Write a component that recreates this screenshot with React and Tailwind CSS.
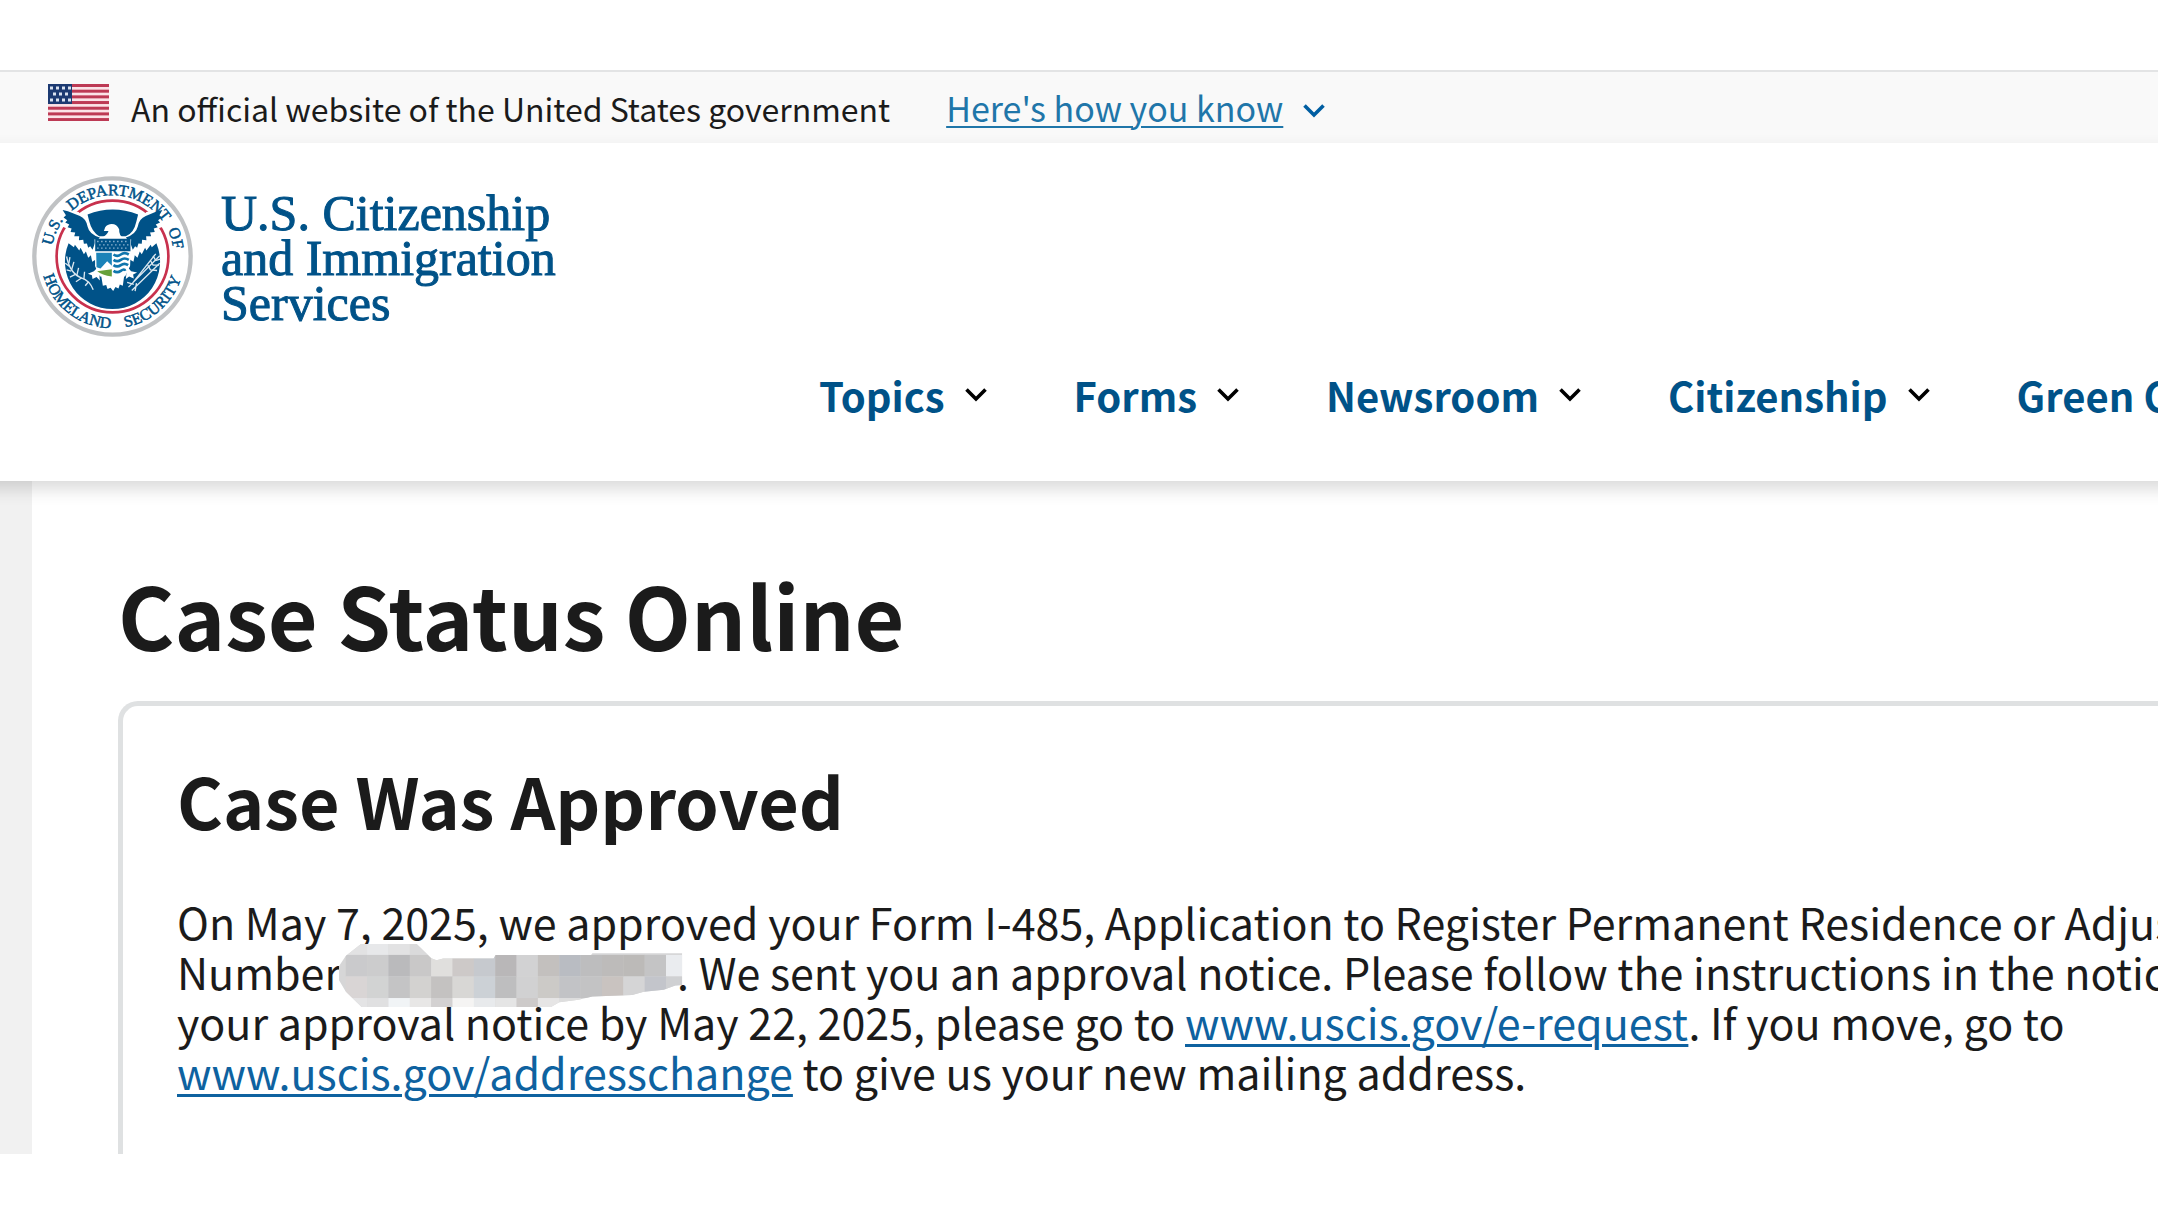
const SANS = "font-['Noto_Sans_CJK_SC','Noto_Sans',sans-serif]";

function Chevron({ className }) {
  return (
    <svg viewBox="0 0 22 14" className={`h-[14px] w-[22px] ${className}`} fill="none" stroke="currentColor" strokeWidth="3.6" aria-hidden="true">
      <path d="M1.5 1.5 L11 11 L20.500 1.5" />
    </svg>
  );
}

function Flag() {
  const stripes = [0, 1, 2, 3, 4, 5, 6];
  const stars = [
    [4, 4], [10, 4], [16, 4], [22, 4],
    [7, 10], [13, 10], [19, 10],
    [4, 16], [10, 16], [16, 16], [22, 16],
  ];
  return (
    <svg viewBox="0 0 61 37" className="h-[37px] w-[61px]" role="img" aria-label="U.S. flag">
      <rect width="61" height="37" fill="#fbe3e8" />
      {stripes.map((i) => (
        <rect key={i} y={i * 5.68} width="61" height="3" fill="#bd3a55" />
      ))}
      <rect width="24" height="20" fill="#1c3a72" />
      {stars.map(([x, y], i) => (
        <rect key={i} x={x - 2} y={y - 1.5} width="3" height="3" fill="#d9e2f0" />
      ))}
    </svg>
  );
}

function Seal() {
  const blue = "#005288";
  const letters = "font-['Liberation_Serif',serif] text-[48px]";
  return (
    <svg viewBox="36 32 484 484" className="h-[161px] w-[161px] shrink-0" role="img" aria-label="U.S. Department of Homeland Security seal">
      <defs>
        <path id="arcTop" d="M94 274 A184 184 0 0 1 462 274" />
        <path id="arcBottom" d="M62 274 A216 216 0 0 0 494 274" />
      </defs>
      <circle cx="278" cy="274" r="235" fill="#fff" stroke="#c0c2c4" strokeWidth="13" />
      <circle cx="278" cy="274" r="168" fill="none" stroke="#c8314d" strokeWidth="8" />
      <path d="M120 128 L176 140 L200 165 L140 190 L124 182 Z M436 128 L380 140 L356 165 L416 190 L434 182 Z" fill="#fff" />
      <path d="M203 148 Q278 118 355 148 L350 168 Q342 205 318 213 L238 213 Q216 200 208 168 Z" fill={blue} />
      <path
        d="M146 234 L162 246 L165 239 L178 256 L182 248 L192 267 L198 259 L205 278 L213 270 L217 290 L228 283 L226 304 L240 334 L316 334 L330 304 L330 283 L341 290 L345 270 L353 278 L360 259 L366 267 L376 248 L380 256 L393 239 L396 246 L410 234 A143 143 0 1 1 146 234 Z"
        fill={blue}
      />
      <path d="M128 134 L144 138 L180 152 Q199 160 203 184 Q208 208 240 217 L226 232 L218 254 L211 243 L205 248 L201 235 L192 236 L190 224 L177 225 L178 213 L163 213 L166 202 L152 200 L155 190 L143 186 L148 178 L136 172 L142 165 L131 157 L138 150 Z" fill={blue} />
      <path d="M428 134 L412 138 L378 152 Q358 160 354 184 Q348 208 318 217 L331 232 L339 254 L346 243 L352 248 L356 235 L366 236 L367 224 L380 225 L379 213 L394 213 L391 202 L405 200 L402 190 L414 186 L408 178 L421 172 L415 165 L426 157 L419 150 Z" fill={blue} />
      <path d="M254 192 Q256 180 270 177 Q290 174 298 192 Q297 212 312 219 L242 219 Q262 210 266 197 L252 197 Z" fill="#fff" />
      <path d="M243 326 L314 326 L309 362 L300 358 L296 370 L287 366 L280 378 L272 368 L263 372 L259 360 L249 362 Z" fill="#fff" />
      <path d="M236 304 L240 346 L230 336 L218 342 L216 330 L204 326 L222 318 Z M322 304 L318 342 L328 334 L342 340 L340 328 L352 322 L334 318 Z" fill="#fff" />
      <path d="M224 222 L334 222 L331 300 Q320 330 279 338 Q238 330 226 300 Z" fill="#fff" />
      <path d="M226 221 H332 V258 H226 Z" fill={blue} />
      <g stroke="#9fc0d8" strokeWidth="4" strokeDasharray="4 8">
        <path d="M232 229 H328" />
        <path d="M238 239 H328" />
        <path d="M232 249 H328" />
      </g>
      <path d="M229 263 H276 V302 L262 288 L242 310 L230 306 Z" fill="#1b83b8" />
      <path d="M232 318 L276 312 V334 Q246 330 232 318 Z" fill="#66a03a" />
      <g fill="none" stroke="#0f76ad" strokeWidth="8">
        <path d="M281 268 Q292 276 303 268 T327 268" />
        <path d="M281 284 Q292 292 303 284 T327 284" />
        <path d="M281 300 Q292 308 303 300 T325 300" />
        <path d="M281 317 Q292 325 303 317 T316 317" />
      </g>
      <g fill="none" stroke="#dce8f0" strokeWidth="4">
        <path d="M140 274 Q150 325 184 338 Q210 346 220 374" />
        <path d="M136 294 L149 304 M150 276 L147 294 M140 314 L154 318 M162 290 L155 314 M150 336 L168 327 M176 308 L171 330 M168 350 L186 338 M194 320 L192 342 M196 362 L206 350" />
        <path d="M420 272 L326 366 M420 294 L336 376 M408 266 L340 352 M322 352 L342 358 M346 378 L350 354" />
        <path d="M400 272 L408 286 L422 282 M392 286 L400 300 L418 300 M384 300 L392 314 L412 316" />
      </g>
      <g fill={blue} stroke={blue} strokeWidth="1.5" textAnchor="middle" className={letters}>
        <text><textPath href="#arcTop" startOffset="13%">U.S.</textPath></text>
        <text><textPath href="#arcTop" startOffset="54%">DEPARTMENT</textPath></text>
        <text><textPath href="#arcTop" startOffset="91%">OF</textPath></text>
        <text><textPath href="#arcBottom" startOffset="29%">HOMELAND</textPath></text>
        <text><textPath href="#arcBottom" startOffset="73%">SECURITY</textPath></text>
      </g>
    </svg>
  );
}

const MOSAIC = [
  { y: 72, h: 33, colors: ["#e2e2e3", "#e7e8ea", "#e2e2e3", "#dadadb"] },
  { y: 105, h: 65, colors: ["#cacacc", "#cccccd", "#bababc", "#c9c8c8", "#e0dfdd", "#cdc9c8", "#c6c9ce", "#b9b7b8", "#d2d2d3", "#c3c0be", "#b9bcc2", "#bdbdbe", "#bdbbba", "#bcbab8", "#c4c4c5", "#eaecef"] },
  { y: 170, h: 65, colors: ["#d9d5d5", "#d2d3d3", "#c4c4c5", "#d3d2d0", "#c4c2c1", "#d8d7d5", "#ccd1d6", "#bebebf", "#d1d1d2", "#cccac7", "#c2c3c6", "#c3c3c4", "#c9c3c0", "#d5d5d6", "#c3c5cb", "#cfd0d2"] },
  { y: 235, h: 30, colors: ["#e4e4e5", "#e0e0e1", "#f1f4f6", "#e8e7e6", "#d3d1d1", "#f5f4f3", "#e8eaec", "#e5e5e5", "#cdcac9", "#e6e5e5", "#dedede"] },
];

function Redaction() {
  return (
    <span className="relative inline-block h-[30px] w-[336px]">
      <svg viewBox="55 72 1042 190" className="absolute -top-4 -left-[3px] h-[63px] w-[347px]" role="img" aria-label="Redacted receipt number">
        <clipPath id="smudge">
          <path d="M122 72 H290 L334 115 L350 121 L370 116 H522 L528 105 H816 L820 100 H1091 V196 L1070 197 L1035 210 L975 216 L940 226 L820 230 L778 240 L720 248 L695 262 H124 L76 215 L55 180 V140 L76 108 Z" />
        </clipPath>
        <g clipPath="url(#smudge)">
          <rect x="55" y="72" width="1042" height="190" fill="#d6d6d7" />
          {MOSAIC.map((row) =>
            row.colors.map((color, i) => (
              <rect key={`${row.y}-${i}`} x={76 + i * 64.4} y={row.y} width="65" height={row.h} fill={color} />
            )),
          )}
        </g>
      </svg>
    </span>
  );
}

const NAV = ["Topics", "Forms", "Newsroom", "Citizenship", "Green Card"];

export default function App() {
  return (
    <div className={`min-h-screen overflow-hidden bg-white pt-[70px] text-[#1b1b1b] ${SANS}`}>
      <section aria-label="Official website" className="flex h-[73px] items-center border-t-2 border-[#e3e4e5] bg-[#f9f9f9] pl-12 leading-[48px] whitespace-nowrap">
        <div className="-mt-2.5">
          <Flag />
        </div>
        <p className="ml-[22px] text-[32px]">An official website of the United States government</p>
        <button type="button" className="ml-14 flex items-center gap-5 text-[34px] text-[#1f76a9]">
          <span className="underline decoration-2 underline-offset-4">Here&apos;s how you know</span>
          <Chevron className="mt-1.5 text-[#005ea2]" />
        </button>
      </section>

      <header className="relative z-10 -mx-6 bg-white px-6 pt-[33px] pb-[62px] shadow-[0_8px_16px_rgba(0,0,0,0.15)]">
        <a href="#home" className="ml-8 inline-flex items-center gap-7 align-top text-[#005288]">
          <Seal />
          <span className="pt-1 font-['Liberation_Serif',serif] text-[50px] leading-[45px] [-webkit-text-stroke:1px]">
            U.S. Citizenship
            <br />
            and Immigration
            <br />
            Services
          </span>
        </a>
        <nav aria-label="Primary" className="mt-[34px] flex gap-[87px] pl-[819px] whitespace-nowrap">
          {NAV.map((label) => (
            <button key={label} type="button" className="flex shrink-0 items-center gap-5 text-[40px] leading-[48px] font-bold text-[#005288]">
              {label}
              <Chevron className="text-black" />
            </button>
          ))}
        </nav>
      </header>

      <div className="bg-[#f1f1f1] pl-8">
        <main className="bg-white pt-[83px] pl-[86px]">
          <h1 className="text-[86px] leading-[100px] font-bold">Case Status Online</h1>
          <section className="mt-[37px] rounded-tl-[20px] border-t-5 border-l-5 border-[#dfe1e2] pt-[49px] pb-[58px] pl-[54px] whitespace-nowrap">
            <h2 className="text-[70px] leading-[90px] font-bold">Case Was Approved</h2>
            <p className="mt-[51px] text-[43px] leading-[50px]">
              On May 7, 2025, we approved your Form I-485, Application to Register Permanent Residence or Adjust
              <br />
              Number
              <Redaction />. We sent you an approval notice. Please follow the instructions in the notice
              <br />
              your approval notice by May 22, 2025, please go to{" "}
              <a href="#e-request" className="text-[#0e62a0] underline decoration-3 underline-offset-4">www.uscis.gov/e-request</a>. If you move, go to
              <br />
              <a href="#addresschange" className="text-[#0e62a0] underline decoration-3 underline-offset-4">www.uscis.gov/addresschange</a> to give us your new mailing address.
            </p>
          </section>
        </main>
      </div>
    </div>
  );
}
